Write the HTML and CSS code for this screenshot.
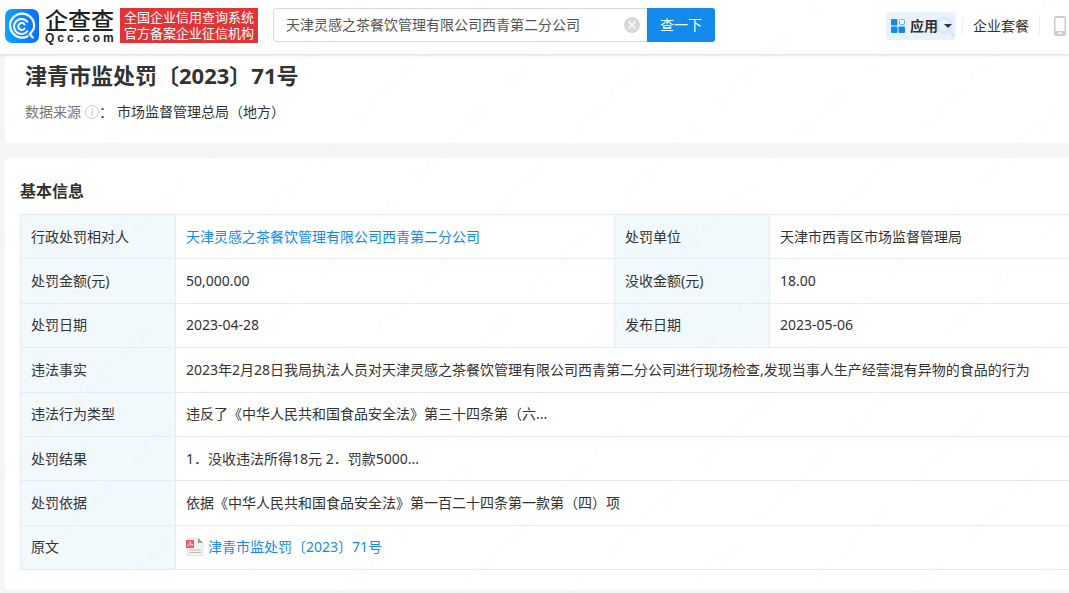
FILE: index.html
```html
<!DOCTYPE html>
<html lang="zh-CN">
<head>
<meta charset="utf-8">
<meta name="viewport" content="width=device-width, initial-scale=1">
<title>津青市监处罚〔2023〕71号</title>
<link rel="stylesheet" href="styles.css">
</head>
<body>
<header class="topbar">
  <a class="brand" href="#">
    <svg class="brand-mark" viewBox="0 0 34 34" aria-hidden="true">
      <defs>
        <linearGradient id="mark" x1="0" y1="0" x2="1" y2="0">
          <stop offset="0" stop-color="#10a4ff"/>
          <stop offset="1" stop-color="#0a6cff"/>
        </linearGradient>
      </defs>
      <rect width="34" height="34" rx="7" fill="url(#mark)"/>
      <g fill="none" stroke="#fff" stroke-linecap="round">
        <path d="M22.6 27.2A12 12 0 1 1 28.4 20.500L24.800 25.200L27.800 28.400" stroke-width="2.200" stroke-linejoin="round"/>
        <path d="M22.300 22.300A7.500 7.500 0 1 1 22.300 12.700" stroke-width="2"/>
        <path d="M19.600 19.500A3.500 3.500 0 1 1 19.600 15.500" stroke-width="2"/>
      </g>
    </svg>
    <span class="brand-name">
      <span class="brand-cn">企查查</span>
      <span class="brand-en">Qcc.com</span>
    </span>
  </a>
  <p class="slogan">全国企业信用查询系统<br>官方备案企业征信机构</p>
  <form class="search">
    <div class="search-field">
      <input class="search-input" type="text" aria-label="搜索企业" value="天津灵感之茶餐饮管理有限公司西青第二分公司">
      <button class="search-clear" type="reset" aria-label="清除">
        <svg viewBox="0 0 16 16" aria-hidden="true"><circle cx="8" cy="8" r="8" fill="#d8d8d8"/><path d="M4.500 4.500l7 7M11.500 4.500l-7 7" stroke="#fff" stroke-width="1.300"/></svg>
      </button>
    </div>
    <button class="search-submit" type="button">查一下</button>
  </form>
  <nav class="tools">
    <button class="apps" type="button">
      <svg class="apps-lens" viewBox="0 0 24 24" aria-hidden="true"><circle cx="11" cy="10" r="8" fill="none" stroke="#d5e8fc" stroke-width="3"/><path d="M16 16l5 5" stroke="#d5e8fc" stroke-width="3" stroke-linecap="round"/></svg>
      <svg class="apps-icon" viewBox="0 0 14 14" aria-hidden="true"><g fill="#128bed"><rect width="6.500" height="6.500" rx="1"/><rect y="7.500" width="6.500" height="6.500" rx="1"/><rect x="7.500" y="7.500" width="6.500" height="6.500" rx="1"/></g><rect x="8.500" y="0.500" width="5" height="5" rx="1" fill="#fff" stroke="#5aaef3"/></svg>
      <span class="apps-label">应用</span>
      <svg class="apps-caret" viewBox="0 0 8 4" aria-hidden="true"><path d="M0 0h8L4 4z" fill="#333"/></svg>
    </button>
    <a class="tool-link" href="#">企业套餐</a>
    <a class="tool-phone" href="#" aria-label="手机版">
      <svg viewBox="0 0 12 20" aria-hidden="true"><rect width="12" height="20" rx="2" fill="#ccc"/><rect x="1.500" y="2" width="9" height="13" fill="#fff"/><rect x="4" y="16.500" width="4" height="1.500" rx="0.700" fill="#fff"/></svg>
    </a>
  </nav>
</header>
<main class="page">
  <section class="card summary">
    <h1 class="title">津青市监处罚〔2023〕71号</h1>
    <p class="source">
      <span class="source-label">数据来源</span>
      <svg class="source-info" viewBox="0 0 14 14" aria-hidden="true"><circle cx="7" cy="7" r="6.500" fill="none" stroke="#ccc"/><path d="M7.300 6L6.800 10.300M7.600 3.600L7.500 4.200" stroke="#bbb" stroke-linecap="round"/></svg>
      <span class="source-colon">：</span>
      <span>市场监督管理总局（地方）</span>
    </p>
  </section>
  <section class="card detail">
    <h2 class="section-title">基本信息</h2>
    <table class="info">
      <colgroup><col class="col-label"><col class="col-value"><col class="col-label"><col></colgroup>
      <tbody>
        <tr><th scope="row">行政处罚相对人</th><td><a class="link" href="#">天津灵感之茶餐饮管理有限公司西青第二分公司</a></td><th scope="row">处罚单位</th><td>天津市西青区市场监督管理局</td></tr>
        <tr><th scope="row">处罚金额(元)</th><td>50,000.00</td><th scope="row">没收金额(元)</th><td>18.00</td></tr>
        <tr><th scope="row">处罚日期</th><td>2023-04-28</td><th scope="row">发布日期</th><td>2023-05-06</td></tr>
        <tr><th scope="row">违法事实</th><td colspan="3">2023年2月28日我局执法人员对天津灵感之茶餐饮管理有限公司西青第二分公司进行现场检查,发现当事人生产经营混有异物的食品的行为</td></tr>
        <tr><th scope="row">违法行为类型</th><td colspan="3">违反了《中华人民共和国食品安全法》第三十四条第（六...</td></tr>
        <tr><th scope="row">处罚结果</th><td colspan="3">1．没收违法所得18元 2．罚款5000...</td></tr>
        <tr><th scope="row">处罚依据</th><td colspan="3">依据《中华人民共和国食品安全法》第一百二十四条第一款第（四）项</td></tr>
        <tr><th scope="row">原文</th><td colspan="3"><a class="link file" href="#"><svg class="file-icon" viewBox="0 0 18 18" aria-hidden="true"><path d="M1.500 0.500H12.500L17 5V17.500H1.500z" fill="#f3f3f3" stroke="#e2e2e2"/><path d="M12 0L17 5H12z" fill="#999"/><path d="M3.500 12H15M3.500 14.500H15" stroke="#bbb"/><rect y="2" width="8" height="8" fill="#f8575b"/><path d="M1.500 8Q4 6.500 4 3.500Q4.200 6.500 7 7Q4 6 1.500 8" fill="none" stroke="#fff" stroke-width="0.700"/></svg>津青市监处罚〔2023〕71号</a></td></tr>
      </tbody>
    </table>
  </section>
</main>
<svg class="watermark" aria-hidden="true">
  <defs>
    <pattern id="wm" width="133" height="81" patternUnits="userSpaceOnUse" patternTransform="translate(902 478) rotate(-45)">
      <text class="watermark-text" x="2" y="16">EESF7DB</text>
    </pattern>
  </defs>
  <rect width="100%" height="100%" fill="url(#wm)"/>
</svg>
</body>
</html>
```

FILE: styles.css
```css
* { box-sizing: border-box; }
body {
  margin: 0;
  background: #f6f6f6;
  color: #333;
  font: 14px/22px "Noto Sans", "Noto Sans CJK SC", sans-serif;
  overflow-x: hidden;
}
h1, h2, p { margin: 0; }
a { color: inherit; text-decoration: none; }
button, input { font: inherit; border: 0; padding: 0; }
button { cursor: pointer; }
svg { display: block; }

.topbar {
  position: relative;
  display: flex;
  align-items: center;
  height: 54px;
  padding: 0 3px 4px 5px;
  background: #fff;
  box-shadow: 0 1px 3px rgba(0, 0, 0, 0.16);
}
.brand { display: flex; align-items: center; gap: 6px; width: 115px; flex: none; padding-top: 2px; color: #222; }
.brand-mark { width: 34px; height: 34px; flex: none; }
.brand-name { display: flex; flex-direction: column; gap: 4px; }
.brand-cn { font: 500 23px/20px "Noto Sans CJK SC", sans-serif; white-space: nowrap; }
.brand-en { font: bold 12px/10px "Liberation Sans", sans-serif; letter-spacing: 3px; white-space: nowrap; }
.slogan {
  flex: none;
  padding: 1px 4px 2px;
  background: #e03537;
  color: #fff;
  font-size: 13px;
  line-height: 16px;
}
.search { display: flex; width: 442px; height: 34px; margin-left: 15px; }
.search-field {
  display: flex;
  flex: 1;
  align-items: center;
  min-width: 0;
  padding: 0 7px 0 12px;
  border: 1px solid #d8d8d8;
  border-right: 0;
  border-radius: 4px 0 0 4px;
}
.search-input { flex: 1; min-width: 0; color: #555; background: transparent; outline: 0; }
.search-clear { width: 16px; height: 16px; background: transparent; }
.search-submit {
  width: 68px;
  background: #128bed;
  color: #fff;
  border-radius: 0 3px 3px 0;
}
.tools { display: flex; align-items: center; margin-left: auto; padding-top: 2px; }
.apps {
  position: relative;
  display: flex;
  align-items: center;
  width: 70px;
  height: 28px;
  padding: 0 4px 0 5px;
  background: #e9f2fe;
  border-radius: 4px;
  color: #333;
}
.apps-lens { position: absolute; right: 0; top: 3px; width: 22px; height: 24px; }
.apps-icon { position: relative; width: 14px; height: 14px; }
.apps-label { position: relative; margin-left: 5px; font-weight: 700; }
.apps-caret { position: relative; width: 8px; height: 4px; margin-left: auto; }
.tool-link {
  margin-left: 6px;
  padding: 0 10px;
  line-height: 18px;
  border-left: 1px solid #eee;
  border-right: 1px solid #eee;
}
.tool-phone { margin-left: 14px; }
.tool-phone svg { width: 12px; height: 20px; }

.page { padding: 0 0 3px 5px; }
.card { background: #fff; border-radius: 4px 0 0 4px; }
.summary { padding: 5px 20px 20px; border-top-left-radius: 0; }
.title { font-size: 22px; line-height: 32px; }
.source { display: flex; align-items: center; margin-top: 10px; }
.source-label { color: #777; }
.source-info { width: 14px; height: 14px; margin-left: 4px; }
.source-colon { width: 18px; }
.detail { margin-top: 15px; padding: 21px 0 20px 15px; }
.section-title { font-size: 16px; line-height: 24px; }
.info {
  width: 100%;
  height: 356px;
  margin-top: 11px;
  table-layout: fixed;
  border-collapse: collapse;
}
.col-label { width: 155px; }
.col-value { width: 439px; }
.info th, .info td {
  padding: 0 10px;
  border: 1px solid #e1edf6;
  text-align: left;
  font-weight: 400;
}
.info th { background: #f1f9fd; }
.info td:last-child { border-right: 0; }
.link { color: #128bed; }
.file { display: flex; align-items: center; gap: 4px; }
.file-icon { width: 18px; height: 18px; }

.watermark {
  position: fixed;
  inset: 0;
  width: 100%;
  height: 100%;
  pointer-events: none;
}
.watermark-text {
  font: 14px "Liberation Sans", sans-serif;
  letter-spacing: 6px;
  fill: #000;
  fill-opacity: 0.012;
}
```
